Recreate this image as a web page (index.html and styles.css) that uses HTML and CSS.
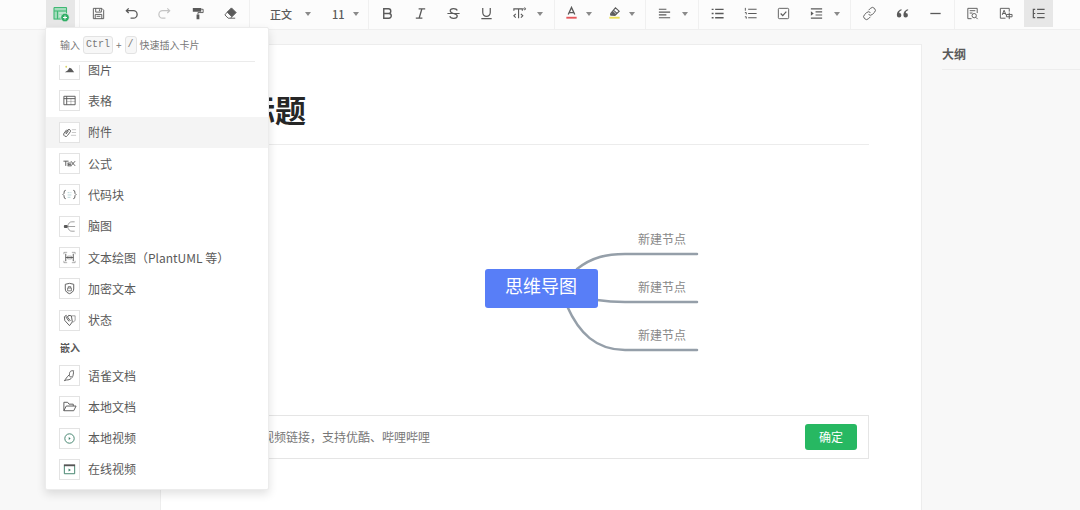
FILE: index.html
```html
<!DOCTYPE html>
<html lang="zh-CN">
<head>
<meta charset="utf-8">
<meta name="viewport" content="width=device-width, initial-scale=1">
<title>无标题</title>
<link rel="stylesheet" href="styles.css">
</head>
<body>
<header class="toolbar" role="toolbar" aria-label="编辑工具栏">
  <div class="group">
    <button class="tool active green" aria-label="插入卡片"><svg viewBox="0 0 18 18" class="big"><rect x="2" y="2.500" width="13" height="12" fill="#a5dcbd" stroke="none"/><path d="M2 2.500h12.500M2 6h12.500M2 2.500v11.500h8M5.500 6v8M14.500 2.500v6" stroke-width="1.100"/><path d="M7 8h7M7 11h5" stroke="#d6efe0"/><circle cx="13" cy="12.500" r="4.200" fill="#2fae64" stroke="#e7e7e7" stroke-width=".6"/><path d="M13 10.500v4M11 12.500h4" stroke="#fff"/></svg></button>
  </div>
  <div class="group">
    <button class="tool" aria-label="保存"><svg viewBox="0 0 16 16"><path d="M2.500 2.500h9l2 2v9h-11zM5 2.500v4h6v-4M4.500 13.500v-4.500h7v4.500M6 11h4M9 3.500v2"/></svg></button>
    <button class="tool" aria-label="撤销"><svg viewBox="0 0 16 16"><path d="M5 2.500 2.500 5 5 7.500M2.500 5h7.500a4 4 0 0 1 0 8H7" stroke-width="1.400"/></svg></button>
    <button class="tool faint" aria-label="重做" disabled><svg viewBox="0 0 16 16"><path d="M11 2.500 13.500 5 11 7.500M13.500 5H6a4 4 0 0 0 0 8h3" stroke-width="1.300"/></svg></button>
    <button class="tool" aria-label="格式刷"><svg viewBox="0 0 16 16"><path d="M3 2h9v4H3zM7 9h3v5H7z" fill="currentColor" stroke="none"/><path d="M12 3.500h2v3.500H8.500v2"/></svg></button>
    <button class="tool" aria-label="清除格式"><svg viewBox="0 0 16 16"><path d="m9 2 5 5-4.500 4.500-5-5z" fill="currentColor"/><path d="m5 6-3 3.500L5.500 13H13M9.500 11.500 8 13"/></svg></button>
  </div>
  <div class="group">
    <span class="pick style-pick"><select aria-label="段落样式"><option>正文</option></select></span>
    <span class="pick size-pick"><select aria-label="字号"><option>11</option></select></span>
  </div>
  <div class="group">
    <button class="tool" aria-label="粗体"><svg viewBox="0 0 16 16"><path d="M4 3h5a2.500 2.500 0 0 1 0 5H4zM4 8h5.500a2.500 2.500 0 0 1 0 5H4z" stroke-width="1.500"/></svg></button>
    <button class="tool" aria-label="斜体"><svg viewBox="0 0 16 16"><path d="M6 3h7M3 13h7M9.500 3l-3 10" stroke-width="1.400"/></svg></button>
    <button class="tool" aria-label="删除线"><svg viewBox="0 0 16 16"><path d="M12 4.800C11 2 4.500 2 4.500 5c0 1.800 2 2.500 3.500 3 3 .8 4 1.400 4 2.600 0 3.300-7 3.400-8 .4M1.500 8h13" stroke-width="1.300"/></svg></button>
    <button class="tool" aria-label="下划线"><svg viewBox="0 0 16 16"><path d="M4 2v5a4 4 0 0 0 8 0V2M2.500 13.500h11" stroke-width="1.300"/></svg></button>
    <button class="tool" aria-label="更多文本样式"><svg viewBox="0 0 16 16"><path d="M2 5V3h9v2M7 3v10M4 8.500 2 10.500l2 2M9.500 8.500l2 2-2 2" stroke-width="1.200"/><circle cx="13.500" cy="3" r="1"/></svg></button><button class="caret" aria-label="展开文本样式"></button>
  </div>
  <div class="group short">
    <button class="tool slim" aria-label="文字颜色"><svg viewBox="0 0 16 16"><path d="m4.500 9 3.500-7.500L11.500 9M5.500 7h5" stroke-width="1.400"/><path d="M2.500 12.500h11" stroke="#e5565a" stroke-width="2"/></svg></button><button class="caret" aria-label="选择文字颜色"></button>
    <button class="tool slim gap" aria-label="背景颜色"><svg viewBox="0 0 16 16"><path d="M4 9.500V8l5-6 4 3.500-4.500 4.500zM7 4.500l4 4" stroke-width="1.200"/><path d="M4 9.500 6.500 6l3 3z" fill="currentColor"/><path d="M2.500 12.500h11" stroke="#ecdf55" stroke-width="2"/></svg></button><button class="caret" aria-label="选择背景颜色"></button>
  </div>
  <div class="group short">
    <button class="tool" aria-label="对齐方式"><svg viewBox="0 0 16 16"><path d="M2 3.500h8M2 6.500h12M2 9.500h8M2 12.500h12" stroke-width="1.200"/></svg></button><button class="caret" aria-label="展开对齐方式"></button>
  </div>
  <div class="group short">
    <button class="tool" aria-label="无序列表"><svg viewBox="0 0 16 16"><path d="M5.500 3.500h9M5.500 8h9M5.500 12.500h9M1.800 3.500h2M1.800 8h2M1.800 12.500h2" stroke-width="1.400"/></svg></button>
    <button class="tool" aria-label="有序列表"><svg viewBox="0 0 16 16"><path d="M5.500 3.500h9M5.500 8h9M5.500 12.500h9" stroke-width="1.200"/><path d="M2.500 2v3M2 7h1.500v2M2 11.500h1.500v2"/></svg></button>
    <button class="tool" aria-label="任务列表"><svg viewBox="0 0 16 16"><rect x="2.500" y="2.500" width="11" height="11" rx="1"/><path d="m5 8 2.200 2.200L11 6" stroke-width="1.300"/></svg></button>
    <button class="tool" aria-label="缩进"><svg viewBox="0 0 16 16"><path d="M2 3h12M7 6.300h7M7 9.600h7M2 13h12" stroke-width="1.300"/><path d="m2 5.500 3 2.500-3 2.500z" fill="currentColor" stroke="none"/></svg></button><button class="caret" aria-label="展开缩进"></button>
  </div>
  <div class="group">
    <button class="tool" aria-label="链接"><svg viewBox="0 0 16 16"><path d="m7 4.500 2-2a3 3 0 0 1 4.300 4.300l-2.300 2.200a3 3 0 0 1-4 0M9 11.500l-2 2a3 3 0 0 1-4.300-4.300L5 7a3 3 0 0 1 4 0"/></svg></button>
    <button class="tool" aria-label="引用"><svg viewBox="0 0 16 16"><path d="M7 3.500C4.500 4 2 6 2 9.800a2.400 2.400 0 1 0 2.500-2.400C4.500 6 5.500 5 7 4.500zM14 3.500c-2.500.5-5 2.500-5 6.300a2.400 2.400 0 1 0 2.500-2.400c0-1.400 1-2.400 2.500-2.900z" fill="currentColor" stroke="none"/></svg></button>
    <button class="tool" aria-label="分割线"><svg viewBox="0 0 16 16"><path d="M2.500 8h11" stroke-width="1.400"/></svg></button>
  </div>
  <div class="group last">
    <button class="tool" aria-label="查找"><svg viewBox="0 0 16 16"><path d="M7 13.500H3v-11h10v5M5 5h6M5 7.500h3"/><circle cx="9.800" cy="10.300" r="2.300"/><path d="m11.500 12 2 2"/></svg></button>
    <button class="tool" aria-label="翻译"><svg viewBox="0 0 16 16"><path d="M8 13H2.500V2.500h9.500V6M4.500 9.500l2-5 2 5M5 8h3M12 7v7M9 9h6v2.500H9z"/></svg></button>
    <button class="tool active" aria-label="大纲"><svg viewBox="0 0 16 16"><path d="M6.500 3.500h8M6.500 8h8M6.500 12.500h8M4.500 3.500H2.500v9h2M2.500 8h2" stroke-width="1.300"/></svg></button>
  </div>
</header>

<div class="workspace">
  <main class="sheet">
    <h1 class="title">无标题</h1>
    <svg class="mindmap" width="240" height="140" viewBox="0 0 240 140" role="img" aria-label="思维导图">
      <g class="edges"><path d="M97 39C112 27 127 24 145 24h72"/><path d="M117 70q13 2 28 2h72"/><path d="M87 76C99 103 116 120 145 120h72"/></g>
      <rect class="root" x="5" y="39" width="113" height="39" rx="3"/>
      <text class="root-label" x="61" y="63">思维导图</text>
      <text class="leaf" x="182" y="14">新建节点</text>
      <text class="leaf" x="182" y="62">新建节点</text>
      <text class="leaf" x="182" y="110">新建节点</text>
    </svg>
    <form class="embed">
      <input type="text" aria-label="视频链接" placeholder="请输入视频链接，支持优酷、哔哩哔哩">
      <button type="button" class="confirm">确定</button>
    </form>
  </main>
  <aside class="outline"><h2>大纲</h2></aside>
</div>

<div class="menu">
  <p class="hint">输入 <kbd>Ctrl</kbd> + <kbd>/</kbd> 快速插入卡片</p>
  <div class="scroller">
    <ul class="items basic">
      <li><button class="item"><span class="box"><svg viewBox="0 0 16 16"><path d="m3 11 3-2 2-3 2 1 3 4z" fill="currentColor" stroke="none"/><circle cx="4.500" cy="5" r="1" fill="#d9d46a" stroke="none"/></svg></span>图片</button></li>
      <li><button class="item"><span class="box"><svg viewBox="0 0 16 16"><path d="M2 3.500h12v9H2zM2 6h12M5 3.500v9"/><path d="M9.500 6v6.500M5 9h9" opacity=".35"/></svg></span>表格</button></li>
      <li><button class="item hovered"><span class="box"><svg viewBox="0 0 16 16"><path d="m3.500 9 3-4a1.700 1.700 0 0 1 2.500 2l-3 4a2.200 2.200 0 0 1-4-2l3-4M4.500 9.500l2.500-3.500"/><path d="M10.500 5H15M10.500 8H15M9.500 11H15" opacity=".35"/></svg></span>附件</button></li>
      <li><button class="item"><span class="box"><svg viewBox="0 0 16 16"><path d="M1.500 5.500H7M4 5.500v5M6 7.500h4M6 10.500h4M6.500 7.500v3M6.500 9h3M9.500 5.500l4.500 5M14 5.500l-4.500 5"/></svg></span>公式</button></li>
      <li><button class="item"><span class="box"><svg viewBox="0 0 16 16"><path d="M4 3.500c-3 0-.5 3.500-3 4.500 2.500 1 0 4.500 3 4.500M12 3.500c3 0 .5 3.500 3 4.500-2.500 1 0 4.500-3 4.500"/><path d="M6 6h2M9 6h1M6 8.500h4M6 11h3" stroke="#85b7bd" opacity=".6"/></svg></span>代码块</button></li>
      <li><button class="item"><span class="box"><svg viewBox="0 0 16 16"><rect x="2" y="6.500" width="4" height="3" rx="1" fill="currentColor" stroke="none"/><path d="M6 8h8M13.500 3h-3Q7 3 6 8q1 5 4.500 5h3" opacity=".6"/></svg></span>脑图</button></li>
      <li><button class="item"><span class="box"><svg viewBox="0 0 16 16"><path d="M4 4v8M12 4v8M4 8h8"/><path d="M2 2.500h3.500M10.500 2.500H14M2 13.500h3.500M10.500 13.500H14M2 2.500v2M14 2.500v2M2 11.500v2M14 11.500v2M6 6.500h4v3H6z" opacity=".5"/></svg></span>文本绘图（PlantUML 等）</button></li>
      <li><button class="item"><span class="box"><svg viewBox="0 0 16 16"><path d="M3.500 3.500 8 2.500l4.500 1v5c0 3-2.500 4.300-4.500 5-2-.7-4.500-2-4.500-5z"/><path d="M6 7.500h4v3H6zM6.700 7.500V6h2.600v1.500" stroke-width=".8"/></svg></span>加密文本</button></li>
      <li><button class="item"><span class="box"><svg viewBox="0 0 16 16"><path d="M8 13.500 3 8 2.500 4l2-1.500 1.500 2 1-2 3 .5 1 6.500zM4 4l3.500 5M6 4.500l3 4"/><path d="M10.500 3H14v5l-2.500 2" opacity=".6"/></svg></span>状态</button></li>
    </ul>
    <h3 class="section">嵌入</h3>
    <ul class="items embeds">
      <li><button class="item"><span class="box"><svg viewBox="0 0 16 16"><path d="M2.500 13.500C4 12 5 9.500 8 7c-.3-3.500 2-4.500 4.500-4-.8.800.2 1.500-.5 3.500-.2 4-3.500 6.500-7 6.200zM8 7c-.5 2 1 3.500 2.500 1.500"/></svg></span>语雀文档</button></li>
      <li><button class="item"><span class="box"><svg viewBox="0 0 16 16"><path d="M2 12.500v-9h4l1.500 2H12v2M2 12.500l2.500-5H15l-2.500 5z"/></svg></span>本地文档</button></li>
      <li><button class="item"><span class="box teal"><svg viewBox="0 0 16 16"><circle cx="8" cy="8" r="5"/><path d="m7.200 6.500 2 1.500-2 1.500z" fill="currentColor" stroke="none"/></svg></span>本地视频</button></li>
      <li><button class="item"><span class="box teal"><svg viewBox="0 0 16 16"><path d="M2.500 4v8.500h11V4"/><path d="M2 3.500h12" stroke="#555" stroke-width="2"/><path d="m7 7 2.500 1.500L7 10z" fill="currentColor" stroke="none"/></svg></span>在线视频</button></li>
    </ul>
  </div>
</div>
</body>
</html>
```

FILE: styles.css
```css
* { box-sizing: border-box; }

body {
  margin: 0;
  min-height: 100vh;
  display: flex;
  flex-direction: column;
  overflow: hidden;
  background: #f8f8f8;
  color: #5a5a5a;
  font: 12px/18px "Noto Sans CJK SC", "Noto Sans", sans-serif;
}

button, input, select { font: inherit; color: inherit; }
button { padding: 0; border: 0; background: none; cursor: pointer; }
svg { display: block; fill: none; stroke: currentColor; }

.toolbar {
  display: flex;
  height: 30px;
  padding-left: 42px;
  background: #fcfcfc;
  border-bottom: 1px solid #efefef;
}

.group {
  display: flex;
  flex: none;
  gap: 4px;
  padding: 0 4px;
  border-right: 1px solid #f0f0f0;
}
.group.short { padding-right: 3px; gap: 0; }
.group.short .tool + .tool { margin-left: 4px; }
.group.last { padding-left: 3px; border: 0; }

.tool { display: grid; place-items: center; width: 29px; height: 27px; }
.tool svg { width: 15px; height: 15px; }
.tool .big { width: 18px; height: 18px; }
.tool.slim { width: 24px; }
.tool.gap { margin-left: 3px; }
.tool.active { background: #e7e7e7; }
.tool.green { color: #3fb873; }
.tool.faint { color: #c4c4c4; }

.caret { width: 16px; height: 27px; padding-left: 3px; }
.tool + .caret { margin-left: -4px; }
.short .tool + .caret { margin-left: 0; }
.caret::before, .pick::after {
  content: "";
  display: block;
  width: 0;
  border: 3px solid transparent;
  border-top: 4px solid #8a8a8a;
  border-bottom: 0;
}

.pick { display: flex; align-items: center; height: 27px; }
.pick select {
  flex: 1;
  min-width: 0;
  padding: 0;
  border: 0;
  background: none;
  appearance: none;
  font-size: 11px;
  font-weight: 500;
}
.style-pick { width: 62px; padding: 0 5px 0 16px; }
.size-pick { width: 44px; padding: 0 5px 0 12px; }

.workspace {
  flex: 1;
  display: flex;
  gap: 20px;
  padding: 14px 0 0 160px;
}

.sheet {
  flex: 1;
  min-width: 0;
  padding: 40px 52px 0;
  background: #fff;
  border: 1px solid #ededed;
  border-bottom: 0;
}

.title {
  margin: 0 0 85px;
  padding-bottom: 11px;
  border-bottom: 1px solid #ececec;
  color: #262626;
  font-size: 31px;
  line-height: 48px;
  font-weight: 700;
}

.mindmap { margin-left: 267px; }
.edges { stroke: #959fa9; stroke-width: 2.500; stroke-linecap: round; }
.root { fill: #587ef7; stroke: none; }
.root-label, .leaf { stroke: none; text-anchor: middle; }
.root-label { fill: #fff; font-size: 18px; }
.leaf { fill: #888; font-size: 12px; }

.embed {
  display: flex;
  align-items: center;
  height: 44px;
  margin-top: 45px;
  padding: 0 11px 0 12px;
  border: 1px solid #e5e5e5;
}
.embed input { flex: 1; min-width: 0; padding: 0; border: 0; outline: 0; }
.embed input::placeholder { color: #777; opacity: 1; }
.confirm {
  width: 52px;
  height: 26px;
  border-radius: 3px;
  background: #27b862;
  color: #fff;
}

.outline { width: 138px; }
.outline h2 {
  margin: 0;
  padding-bottom: 5px;
  border-bottom: 1px solid #ededed;
  font-size: 12px;
  line-height: 20px;
  font-weight: 700;
}

.menu {
  position: absolute;
  top: 27px;
  left: 45px;
  width: 224px;
  padding-bottom: 4px;
  background: #fff;
  border: 1px solid #ececec;
  border-radius: 2px;
  box-shadow: 0 4px 10px rgba(0, 0, 0, .12);
}

.hint {
  display: flex;
  align-items: center;
  gap: 3px;
  height: 34px;
  margin: 0 13px 3px 14px;
  border-bottom: 1px solid #ebebeb;
  color: #777;
  font-size: 10px;
}
kbd {
  padding: 0 2px;
  border: 1px solid #e3e3e3;
  border-radius: 3px;
  background: #f7f7f7;
  font: 10px/16px "Liberation Mono", monospace;
}

.scroller { overflow: hidden; }
.items { display: grid; grid-auto-rows: 1fr; margin: 0; padding: 0; list-style: none; }
.basic { height: 282px; margin-top: -11px; }
.embeds { height: 125px; }
.item {
  display: flex;
  align-items: center;
  gap: 8px;
  width: 100%;
  height: 100%;
  padding: 0 13px;
  text-align: left;
  white-space: nowrap;
}
.item.hovered { background: #f4f4f4; }
.box {
  display: grid;
  place-items: center;
  width: 21px;
  height: 21px;
  background: #fff;
  border: 1px solid #e3e3e3;
}
.box svg { width: 15px; height: 15px; }
.box.teal { color: #3d8069; }
.section {
  margin: 0;
  padding-left: 14px;
  font-size: 10px;
  line-height: 24px;
  font-weight: 700;
}
```
